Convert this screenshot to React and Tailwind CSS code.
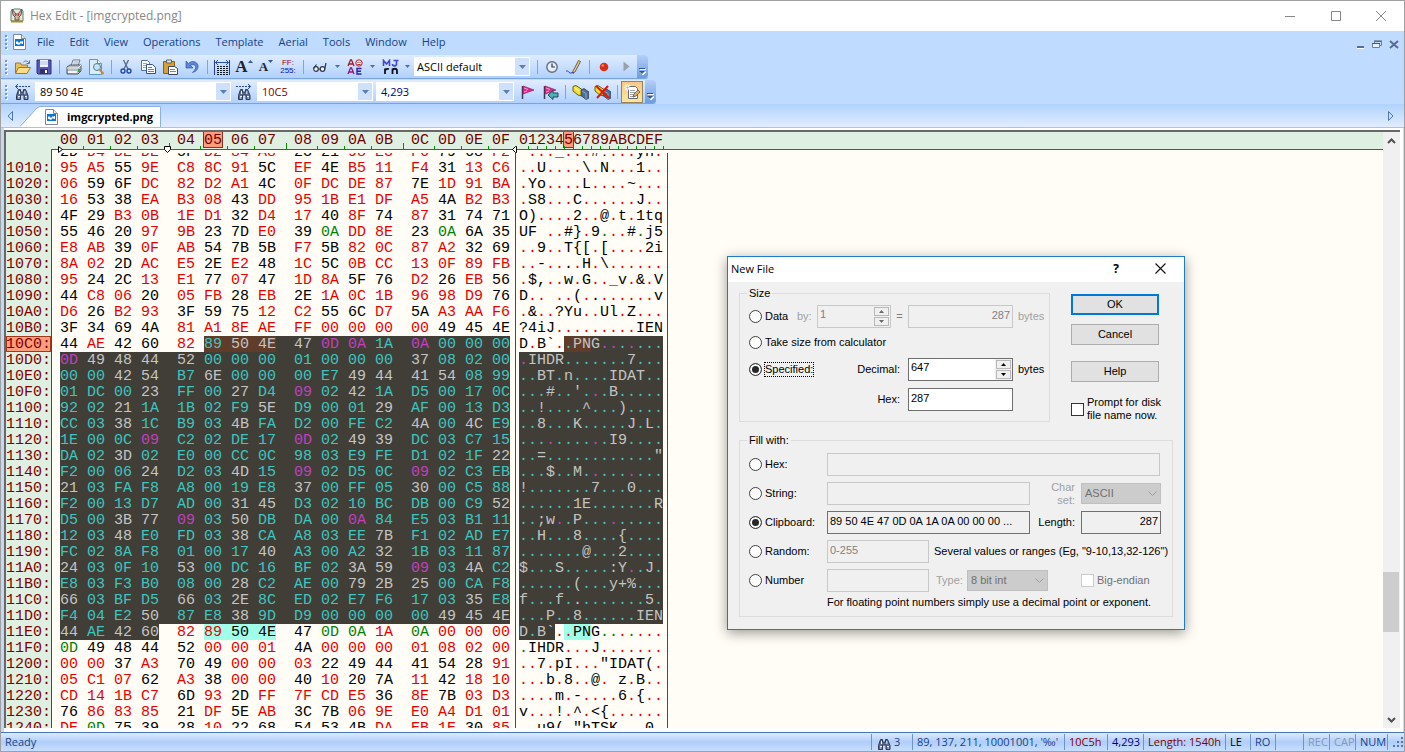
import React from 'react';

const MEMORY = `
1000 2D D4 DE DE 5F D2 84 A8 23 21 98 E3 F6 79 68 F2
1010 95 A5 55 9E C8 8C 91 5C EF 4E B5 11 F4 31 13 C6
1020 06 59 6F DC 82 D2 A1 4C 0F DC DE 87 7E 1D 91 BA
1030 16 53 38 EA B3 08 43 DD 95 1B E1 DF A5 4A B2 B3
1040 4F 29 B3 0B 1E D1 32 D4 17 40 8F 74 87 31 74 71
1050 55 46 20 97 9B 23 7D E0 39 0A DD 8E 23 0A 6A 35
1060 E8 AB 39 0F AB 54 7B 5B F7 5B 82 0C 87 A2 32 69
1070 8A 02 2D AC E5 2E E2 48 1C 5C 0B CC 13 0F 89 FB
1080 95 24 2C 13 E1 77 07 47 1D 8A 5F 76 D2 26 EB 56
1090 44 C8 06 20 05 FB 28 EB 2E 1A 0C 1B 96 98 D9 76
10A0 D6 26 B2 93 3F 59 75 12 C2 55 6C D7 5A A3 AA F6
10B0 3F 34 69 4A 81 A1 8E AE FF 00 00 00 00 49 45 4E
10C0 44 AE 42 60 82 89 50 4E 47 0D 0A 1A 0A 00 00 00
10D0 0D 49 48 44 52 00 00 00 01 00 00 00 37 08 02 00
10E0 00 00 42 54 B7 6E 00 00 00 E7 49 44 41 54 08 99
10F0 01 DC 00 23 FF 00 27 D4 09 02 42 1A D5 00 17 0C
1100 92 02 21 1A 1B 02 F9 5E D9 00 01 29 AF 00 13 D3
1110 CC 03 38 1C B9 03 4B FA D2 00 FE C2 4A 00 4C E9
1120 1E 00 0C 09 C2 02 DE 17 0D 02 49 39 DC 03 C7 15
1130 DA 02 3D 02 E0 00 CC 0C 98 03 E9 FE D1 02 1F 22
1140 F2 00 06 24 D2 03 4D 15 09 02 D5 0C 09 02 C3 EB
1150 21 03 FA F8 A8 00 19 E8 37 00 FF 05 30 00 C5 88
1160 F2 00 13 D7 AD 00 31 45 D3 02 10 BC DB 00 C9 52
1170 D5 00 3B 77 09 03 50 DB DA 00 0A 84 E5 03 B1 11
1180 12 03 48 E0 FD 03 38 CA A8 03 EE 7B F1 02 AD E7
1190 FC 02 8A F8 01 00 17 40 A3 00 A2 32 1B 03 11 87
11A0 24 03 0F 10 53 00 DC 16 BF 02 3A 59 09 03 4A C2
11B0 E8 03 F3 B0 08 00 28 C2 AE 00 79 2B 25 00 CA F8
11C0 66 03 BF D5 66 03 2E 8C ED 02 E7 F6 17 03 35 E8
11D0 F4 04 E2 50 87 E8 38 9D D9 00 00 00 00 49 45 4E
11E0 44 AE 42 60 82 89 50 4E 47 0D 0A 1A 0A 00 00 00
11F0 0D 49 48 44 52 00 00 01 4A 00 00 00 01 08 02 00
1200 00 00 37 A3 70 49 00 00 03 22 49 44 41 54 28 91
1210 05 C1 07 62 A3 38 00 00 40 10 20 7A 11 42 18 10
1220 CD 14 1B C7 6D 93 2D FF 7F CD E5 36 8E 7B 03 D3
1230 76 86 83 85 21 DF 5E AB 3C 7B 06 9E E0 A4 D1 01
1240 DE 0D 75 39 28 10 22 68 54 53 4B DA EB 1E 30 85
`.trim().split('\n').map((line) => line.split(' '));

const SELECTION = [0x10c5, 0x11e3];
const MATCHES = [[0x10c5, 0x10c7], [0x11e5, 0x11e7]];
const CURSOR_COLUMN = 5;
const DIGITS = '0123456789ABCDEF'.split('');

const isSelected = (a) => a >= SELECTION[0] && a <= SELECTION[1];
const matchOf = (a) => MATCHES.findIndex(([s, e]) => a >= s && a <= e);

function fill(a) {
  if (matchOf(a) >= 0) return isSelected(a) ? 'bg-[#603c2a]' : 'bg-[#a0ffe8]';
  return isSelected(a) ? 'bg-[#403e36]' : '';
}

function gapFill(a) {
  if (matchOf(a) >= 0 && matchOf(a) === matchOf(a + 1)) return fill(a);
  return isSelected(a) && isSelected(a + 1) ? 'bg-[#403e36]' : '';
}

function ink(hex, a) {
  const code = parseInt(hex, 16);
  const sel = isSelected(a);
  if (code === 9 || code === 10 || code === 13) return sel ? 'text-[#c040c0]' : 'text-[#008000]';
  if (code >= 32 && code < 127) return sel ? 'text-[#c4c4c4]' : 'text-black';
  return sel ? 'text-[#3fc4c0]' : 'text-[#e80000]';
}

function glyph(hex) {
  const code = parseInt(hex, 16);
  return code >= 32 && code < 127 ? String.fromCharCode(code) : '.';
}

const cellWidth = (i) => (i === 15 ? 'w-[18px]' : i % 4 === 3 ? 'w-[36px]' : 'w-[27px]');

/* ---------- icons ---------- */

const Svg = ({ w = 16, h = 16, children, className = '' }) => (
  <svg width={w} height={h} viewBox={`0 0 ${w} ${h}`} className={`shrink-0 ${className}`} aria-hidden="true">{children}</svg>
);

const LogoIcon = () => (
  <Svg w={14} h={16}>
    <path d="M1 3l3-2h6l3 2v10H1z" fill="#e4ecd4" stroke="#5b7b6e" />
    <path d="M1 13.500h12" stroke="#b08a28" strokeWidth="2" />
    <path d="M2 1l4 5h2l4-5-1 6-2 2v3H5V9L3 7z" fill="#dcae9c" stroke="#4c4c5c" strokeWidth=".9" />
    <path d="M5 6l1 2M9 6L8 8" stroke="#b02020" />
  </Svg>
);

const DocIcon = () => (
  <Svg w={13} h={16}>
    <path d="M.5 .5h8l4 4v11H.5z" fill="#fff" stroke="#808890" />
    <path d="M8.500.5v4h4" fill="#e4e8ec" stroke="#808890" />
    <path d="M2 5h9v7H2z" fill="#0a78d0" />
    <path d="M3 8l1-1 2 2 2-2 1 1v-1h1v3H9L8 9l-2 2-2-1H3z" fill="#fff" />
  </Svg>
);

const OpenIcon = () => (
  <Svg w={17}>
    <path d="M1.500 14V4h5l1 2h6v3" fill="#e8c060" stroke="#a07820" />
    <path d="M1.500 14.500l3-6h12l-3.500 6z" fill="#fcdc84" stroke="#a07820" />
    <path d="M9 3.500c2-2.500 5-1.500 6 .5m.5-2.500v3h-3" fill="none" stroke="#6070a0" />
  </Svg>
);

const SaveIcon = () => (
  <Svg>
    <path d="M1 1h14v14H2l-1-1z" fill="#5458b8" stroke="#30306c" />
    <path d="M4 1h8v7H4z" fill="#eef2fc" />
    <path d="M4 3h8M4 5h8" stroke="#b4c0e0" />
    <path d="M4 10h8v5H4z" fill="#303468" />
    <path d="M9 11h2v3H9z" fill="#fff" />
  </Svg>
);

const PrintIcon = () => (
  <Svg>
    <path d="M5 7l2-6h7l-2 6z" fill="#fff" stroke="#707888" />
    <path d="M7.500 3h5M7 5h5" stroke="#88a8d0" />
    <path d="M1 8l3-2h11v6l-3 3H1z" fill="#b8bcc4" stroke="#505860" />
    <path d="M1 9h11l3-3" fill="none" stroke="#eee" />
    <path d="M2 12h9v2H2z" fill="#f4f4f4" />
    <path d="M12 10h2v3h-2z" fill="#18b818" />
  </Svg>
);

const PreviewIcon = () => (
  <Svg>
    <path d="M1.500.5h8l4 4v11h-12z" fill="#d8ecfa" stroke="#5898c8" />
    <path d="M9.500.5v4h4" fill="#fff" stroke="#5898c8" />
    <circle cx="9" cy="8" r="3.500" fill="#c0e4f8" stroke="#607890" />
    <path d="M11.500 10.500l4 4.500" stroke="#c88838" strokeWidth="2" />
  </Svg>
);

const CutIcon = () => (
  <Svg>
    <path d="M5.500 1l4.500 9M10.500 1L6 10" stroke="#5c6c88" strokeWidth="1.400" />
    <circle cx="5" cy="12" r="2" fill="none" stroke="#2848a8" strokeWidth="1.400" />
    <circle cx="11" cy="12" r="2" fill="none" stroke="#2848a8" strokeWidth="1.400" />
  </Svg>
);

const CopyIcon = () => (
  <Svg>
    <path d="M1.500 1.500h6l2 2v8h-8z" fill="#fff" stroke="#5070b8" />
    <path d="M3 4.500h4M3 6.500h4M3 8.500h4" stroke="#88a4e0" />
    <path d="M6.500 5.500h6l3 3v6h-9z" fill="#fff" stroke="#3050a0" />
    <path d="M8 8.500h4M8 10.500h6M8 12.500h6" stroke="#5880d8" />
  </Svg>
);

const PasteIcon = () => (
  <Svg>
    <path d="M1.500 2.500h11v12h-11z" fill="#d8a030" stroke="#906010" />
    <path d="M4.500 1h5v3h-5z" fill="#e4e4e4" stroke="#606060" />
    <path d="M6.500 7.500h6l3 2v6h-9z" fill="#fff" stroke="#404860" />
    <path d="M8 10.500h5M8 12.500h6" stroke="#7088b8" />
  </Svg>
);

const UndoIcon = () => (
  <Svg>
    <path d="M2 2v7h7L6.500 6.500c3-2 6 0 5 3-.5 1.500-2 3-3 4 4-1 6-4 5.500-7C13 2.500 8 1 4.500 4.500z" fill="#5c84d8" stroke="#3458a8" strokeWidth=".7" />
  </Svg>
);

const GridIcon = () => (
  <Svg>
    <path d="M.5 1v15M15.500 1v15" stroke="#283c90" />
    <path d="M1 3.500h14M4 1L1.500 3.500 4 6M12 1l2.500 2.500L12 6" fill="none" stroke="#2850b8" />
    <path d="M3 7.500h11M3 9.500h11M3 11.500h11M3 13.500h11M3 15.500h11" stroke="#101820" strokeDasharray="2 1" />
  </Svg>
);

const FontIcon = ({ up }) => (
  <span className="flex items-center font-['Liberation_Serif',serif] font-bold leading-none text-[#202428]">
    <span className={up ? 'text-[17px]' : 'text-[13px]'}>A</span>
    <Svg w={5} h={14}><path d={up ? 'M0 3l2.500-3L5 3z' : 'M0 0l2.500 3L5 0z'} fill="#3858a8" /></Svg>
  </span>
);

const RadixIcon = () => (
  <span className="flex flex-col items-center font-['Liberation_Sans',sans-serif] text-[8px] leading-[8px]">
    <span className="text-[#a00010]">FF:</span>
    <span className="text-[#1010b0]">255:</span>
  </span>
);

const GlassesIcon = () => (
  <Svg>
    <circle cx="4" cy="10" r="2.300" fill="#eef4fc" stroke="#303848" strokeWidth="1.200" />
    <circle cx="10.500" cy="10" r="2.300" fill="#eef4fc" stroke="#303848" strokeWidth="1.200" />
    <path d="M1.500 9.500L4.500 5.500M12.700 10l1.300-6M6.500 10h1.500" fill="none" stroke="#303848" strokeWidth="1.200" />
  </Svg>
);

const CharsetIcon = () => (
  <Svg>
    <path d="M1 7l2.500-6h1L7 7M2 5h4" fill="none" stroke="#a02028" strokeWidth="1.300" />
    <circle cx="12" cy="4" r="3.200" fill="#fce8e8" stroke="#b02030" />
    <path d="M10.500 3.500h1M12.500 3.500h1M10.500 5.500h3" stroke="#b02030" />
    <path d="M1 15l2.500-6h1L7 15M2 13h4" fill="none" stroke="#8c1878" strokeWidth="1.300" />
    <path d="M14.500 9.500H10v5.500h4.500M10 12.300h4" fill="none" stroke="#3020a0" strokeWidth="1.400" />
  </Svg>
);

const FontsIcon = () => (
  <Svg w={17}>
    <path d="M1.500 7V1.500L4.500 5l3-3.500V7M14.500 1v4c0 2.500-4 2.500-4 0M11.500 1.500h5" fill="none" stroke="#4448c8" strokeWidth="1.600" />
    <path d="M3 15V9.500M3 12c0-2 2-2.500 4-2M10.500 15V9.500M10.500 12c0-3 4.500-3 4.500 0v3" fill="none" stroke="#101018" strokeWidth="1.800" />
  </Svg>
);

const ClockIcon = () => (
  <Svg w={14} h={14}>
    <circle cx="7" cy="7" r="5.200" fill="#e4eefc" stroke="#686c78" strokeWidth="1.400" />
    <path d="M7 3.500V7h3" fill="none" stroke="#303840" strokeWidth="1.200" />
  </Svg>
);

const PencilIcon = () => (
  <Svg>
    <path d="M7 12L12.500 1.500l2 1L9 13l-2.500 1z" fill="#f0c880" stroke="#605440" strokeWidth=".9" />
    <path d="M0 12.500c2-2 3 2 5 1.500s1-1 3 .5" fill="none" stroke="#3030c0" />
  </Svg>
);

const RecordIcon = () => (
  <Svg w={10} h={10}><circle cx="5" cy="5" r="4.300" fill="#d83010" /><circle cx="3.800" cy="3.500" r="1.300" fill="#f08860" /></Svg>
);

const PlayIcon = () => <Svg w={7} h={11}><path d="M.5.5v10l6-5z" fill="#98a0ac" /></Svg>;

const Binoculars = ({ dir }) => (
  <Svg w={16} h={16}>
    {dir === 'left' && <path d="M2 2.500h2m1 0h2m1 0h2m1 0h2m1 0h2M4 0L1.500 2.500 4 5" fill="none" stroke="#2c4ea0" />}
    {dir === 'right' && <path d="M0 2.500h2m1 0h2m1 0h2m1 0h2m1 0h3M12 0l2.500 2.500L12 5" fill="none" stroke="#2c4ea0" />}
    <path d="M4.500 5.500h2V8h3V5.500h2L14 11.500v4h-4V11H6.500v4.500h-4v-4z" fill="#5c6c90" stroke="#2c3858" />
    <path d="M4 12.500h2M11 12.500h2M5.500 7v3M10.800 7v3M4 14h1.500M11.500 14h1.500" stroke="#e8f0fc" />
  </Svg>
);

const FlagIcon = ({ arrow }) => (
  <Svg w={17}>
    <path d="M2.500 2v13" stroke="#403850" strokeWidth="1.500" />
    <path d="M3 2l11 4-11 4z" fill="#e02890" stroke="#901858" strokeWidth=".7" />
    <path d="M4 4l4 1.500M4 8l3-1" stroke="#f8a0c8" />
    {arrow && <path d="M6 11l5-4.500V9h5v4h-5v2.500z" fill="#50b0b8" stroke="#204858" />}
  </Svg>
);

const HighlighterIcon = ({ crossed }) => (
  <Svg w={17}>
    <path d="M1 2.500l3-1 6 4v6.500L6 11 1 7z" fill="#f8e028" stroke="#505018" strokeWidth=".9" />
    <path d="M9 6l3-1.500L17 8v6l-3 1.500-5-4z" fill="#506c98" stroke="#283448" strokeWidth=".7" />
    <path d="M10 7l4 2.500V15" fill="none" stroke="#a0b4d0" strokeWidth=".8" />
    <path d="M2.500 3.500l5 3.500" stroke="#fff8a8" />
    {crossed && <path d="M2 2l13 12M14 2L3 14" stroke="#e01808" strokeWidth="2" />}
  </Svg>
);

const PropsIcon = () => (
  <Svg>
    <path d="M4.500 2.500h7l2 2v10h-9z" fill="#fff" stroke="#686c78" />
    <path d="M6 6.500h5M6 8.500h5M6 10.500h4M6 12.500h3" stroke="#a0a8b0" />
    <path d="M3.500 0v7M0 3.500h7M1 1l5 5M6 1L1 6" stroke="#fff" strokeWidth="1.200" />
    <path d="M3.500 1.500v4M1.500 3.500h4" stroke="#f8c830" />
    <path d="M9 13l1-3 4-4 2 2-4 4z" fill="#d8b078" stroke="#605040" strokeWidth=".8" />
  </Svg>
);

const Caret = () => (
  <Svg w={7} h={4}><path d="M0 0l3.500 4L7 0z" fill="#5580b8" /></Svg>
);

const SpinCaret = ({ up, dim }) => (
  <Svg w={5} h={3}><path d={up ? 'M0 3l2.500-3L5 3z' : 'M0 0l2.500 3L5 0z'} fill={dim ? '#686868' : '#000'} /></Svg>
);

/* ---------- window chrome ---------- */

const Grip = () => (
  <Svg w={10} h={16}>
    {[1, 5, 9, 13].map((y) => (
      <g key={y}><path d={`M5 ${y + 1}h2v2H5z`} fill="#fff" /><path d={`M4 ${y}h2v2H4z`} fill="#6c96d4" /></g>
    ))}
  </Svg>
);

const Separator = () => <div className="flex w-2 shrink-0 justify-center"><div className="h-[14px] w-px bg-[#7ea6dc]" /></div>;

const Tool = ({ label, active, children }) => (
  <button
    type="button"
    aria-label={label}
    className={`flex h-[22px] w-[22px] shrink-0 items-center justify-center ${active ? 'border border-[#98845c] bg-linear-to-b from-[#f8c888] to-[#ffe4a0]' : ''}`}
  >
    {children}
  </button>
);

const SplitTool = ({ label, children }) => (
  <div className="flex w-[35px] shrink-0 items-center">
    <Tool label={label}>{children}</Tool>
    <button type="button" aria-label={`${label} options`} className="flex h-[22px] w-[13px] items-center justify-center">
      <Svg w={5} h={3}><path d="M0 0l2.500 3L5 0z" fill="#4870b0" /></Svg>
    </button>
  </div>
);

const BarEnd = () => (
  <button type="button" aria-label="Toolbar options" className="flex h-full w-[11px] shrink-0 items-end justify-center rounded-r-[3px] bg-linear-to-b from-[#b4d0f8] to-[#6c9ce0] pb-[3px]">
    <Svg w={7} h={7}><path d="M1 1.500h6M1 4l3 3 3-3z" stroke="#fff" fill="#fff" /><path d="M0 .5h6" stroke="#305898" /><path d="M0 3l3 3 3-3z" fill="#305898" /></Svg>
  </button>
);

const Combo = ({ label, value, className, color }) => (
  <div className={`flex h-[19px] shrink-0 items-center bg-white ${className}`}>
    <input aria-label={label} defaultValue={value} className={`h-full min-w-0 flex-1 pl-[5px] text-[11px] outline-none ${color}`} />
    <button type="button" aria-label={`${label} history`} className="mr-px flex h-[17px] w-[14px] items-center justify-center bg-[#cfe0fa]"><Caret /></button>
  </div>
);

const MENUS = ['File', 'Edit', 'View', 'Operations', 'Template', 'Aerial', 'Tools', 'Window', 'Help'];

function TitleBar() {
  return (
    <header className="flex h-[30px] shrink-0 items-center bg-white pl-[9px]">
      <LogoIcon />
      <h1 className="ml-[6px] text-[12px] text-[#888]">Hex Edit - [imgcrypted.png]</h1>
      <div className="ml-auto flex">
        <button type="button" aria-label="Minimize" className="flex h-[30px] w-[46px] items-center justify-center"><Svg w={10} h={10}><path d="M0 5.500h10" stroke="#888" /></Svg></button>
        <button type="button" aria-label="Maximize" className="flex h-[30px] w-[45px] items-center justify-center"><Svg w={10} h={10}><path d="M.5.5h9v9h-9z" fill="none" stroke="#888" /></Svg></button>
        <button type="button" aria-label="Close" className="flex h-[30px] w-[46px] items-center justify-center"><Svg w={10} h={10}><path d="M0 0l10 10M10 0L0 10" stroke="#888" /></Svg></button>
      </div>
    </header>
  );
}

function MenuBar() {
  return (
    <nav className="flex h-[24px] shrink-0 items-center bg-[#bfdbff] pb-[2px] pr-[5px]">
      <Grip />
      <span className="ml-[2px]"><DocIcon /></span>
      <div className="ml-[4px] flex gap-px">
        {MENUS.map((m) => <button key={m} type="button" className="px-[7px] text-[11px] text-[#15428b]">{m}</button>)}
      </div>
      <div className="ml-auto flex items-center gap-[7px] pt-[4px]">
        <button type="button" aria-label="Minimize document"><Svg w={9} h={9}><path d="M1 8.500h7" stroke="#fff" /><path d="M1 7h7" stroke="#5c6c90" strokeWidth="2" /></Svg></button>
        <button type="button" aria-label="Restore document"><Svg w={10} h={9}><path d="M2.500 1.500h7v4h-7z" fill="none" stroke="#6880a8" /><path d="M.5 3.500h7v4h-7z" fill="#e8f0fc" stroke="#6880a8" /><path d="M0 3.500h8M2 1h8" stroke="#505868" /></Svg></button>
        <button type="button" aria-label="Close document"><Svg w={10} h={9}><path d="M1 1l8 7M9 1L1 8" stroke="#566c94" strokeWidth="2" /></Svg></button>
      </div>
    </nav>
  );
}

const BAR = 'flex h-[24px] w-max items-center rounded-r-[3px] border-b border-[#78a4e0] bg-linear-to-b from-[#e0ecff] via-[#c8dfff] to-[#b0d0fc]';

function ToolBars() {
  return (
    <div className="shrink-0 bg-[#bfdbff]">
      <div className={BAR}>
        <Grip />
        <Tool label="Open"><OpenIcon /></Tool>
        <Tool label="Save"><SaveIcon /></Tool>
        <Separator />
        <Tool label="Print"><PrintIcon /></Tool>
        <Tool label="Print preview"><PreviewIcon /></Tool>
        <Separator />
        <Tool label="Cut"><CutIcon /></Tool>
        <Tool label="Copy"><CopyIcon /></Tool>
        <Tool label="Paste"><PasteIcon /></Tool>
        <Tool label="Undo"><UndoIcon /></Tool>
        <Separator />
        <Tool label="Fit columns"><GridIcon /></Tool>
        <Tool label="Increase font"><FontIcon up /></Tool>
        <Tool label="Decrease font"><FontIcon /></Tool>
        <Tool label="Hex or decimal addresses"><RadixIcon /></Tool>
        <Separator />
        <div className="ml-[2px] flex">
          <SplitTool label="Display"><GlassesIcon /></SplitTool>
          <SplitTool label="Character set"><CharsetIcon /></SplitTool>
          <SplitTool label="Fonts"><FontsIcon /></SplitTool>
        </div>
        <div className="relative mr-[3px] w-[116px]">
          <select aria-label="Scheme" className="block h-[19px] w-full appearance-none bg-white pl-[3px] text-[11px] text-black">
            <option>ASCII default</option>
          </select>
          <span className="pointer-events-none absolute right-px top-px flex h-[17px] w-[14px] items-center justify-center bg-[#cfe0fa]"><Caret /></span>
        </div>
        <Separator />
        <Tool label="Time"><ClockIcon /></Tool>
        <Tool label="Edit scheme"><PencilIcon /></Tool>
        <Separator />
        <Tool label="Record"><RecordIcon /></Tool>
        <Tool label="Play"><PlayIcon /></Tool>
        <BarEnd />
      </div>
      <div className={`${BAR} mt-px`}>
        <Grip />
        <Tool label="Find previous"><Binoculars dir="left" /></Tool>
        <Combo label="Find" value="89 50 4E" className="ml-[2px] w-[196px]" color="text-black" />
        <div className="mx-[2px]"><Tool label="Find next"><Binoculars dir="right" /></Tool></div>
        <Combo label="Hex address" value="10C5" className="w-[116px]" color="text-[#800000]" />
        <Combo label="Decimal address" value="4,293" className="mx-[3px] w-[138px]" color="text-[#000080]" />
        <Tool label="Bookmark"><FlagIcon /></Tool>
        <Tool label="Next bookmark"><FlagIcon arrow /></Tool>
        <Separator />
        <Tool label="Highlight"><HighlighterIcon /></Tool>
        <Tool label="Clear highlight"><HighlighterIcon crossed /></Tool>
        <Separator />
        <Tool label="Properties" active><PropsIcon /></Tool>
        <div className="ml-[2px] h-full"><BarEnd /></div>
      </div>
    </div>
  );
}

function TabStrip() {
  return (
    <div className="flex h-[24px] shrink-0 items-end border-b border-[#a4c4ec] bg-linear-to-b from-[#b0d2fe] to-[#e2edff] px-[6px]">
      <button type="button" aria-label="Scroll tabs left" className="mb-[6px]"><Svg w={6} h={10}><path d="M5.500.5v9L1 5z" fill="none" stroke="#4878b8" /></Svg></button>
      <div className="ml-[7px] flex h-[21px] items-end">
        <Svg w={20} h={21}><path d="M0 21L17 2l3-1.500V21z" fill="#fff" /><path d="M0 20.500L17 2l3-1.500" fill="none" stroke="#8cb0e4" /></Svg>
        <button type="button" className="flex h-[21px] items-center rounded-tr-[2px] border-t border-r border-[#8cb0e4] bg-white pl-[5px] pr-[7px]">
          <DocIcon />
          <span className="ml-[9px] text-[11px] font-bold text-black">imgcrypted.png</span>
        </button>
      </div>
      <button type="button" aria-label="Scroll tabs right" className="mb-[6px] ml-auto mr-[4px]"><Svg w={6} h={10}><path d="M.5.5v9L5 5z" fill="none" stroke="#4878b8" /></Svg></button>
    </div>
  );
}

/* ---------- hex view ---------- */

const HEX_STARTS = DIGITS.map((_, i) => 54 + i * 27 + Math.floor(i / 4) * 9);

const MONO = "font-['Liberation_Mono',monospace] text-[15px]";

function Ruler() {
  return (
    <div className={`relative flex h-[18px] shrink-0 bg-[#dfefe1] pl-[54px] leading-[17px] text-[#700000] ${MONO}`}>
      {DIGITS.map((d, i) => (
        <div key={d} className={`shrink-0 ${cellWidth(i)}`}>
          <span className={`block h-[15px] w-[18px] ${i === CURSOR_COLUMN ? 'bg-[#ff9c7c] outline outline-[#903018]' : ''}`}>0{d}</span>
        </div>
      ))}
      <div className="ml-[9px] flex">
        {DIGITS.map((d, i) => (
          <span key={d} className={`h-[15px] w-[9px] ${i === CURSOR_COLUMN ? 'bg-[#ff9c7c] outline outline-[#903018]' : ''}`}>{d}</span>
        ))}
      </div>
      <div className="absolute bottom-0 left-[45px] right-0 h-px bg-[#009000]" />
      <svg className="absolute -bottom-[3px] left-0 z-10" width="664" height="10" aria-hidden="true">
        {HEX_STARTS.slice(1).map((x, k) => (
          <path key={x} d={k % 4 === 3 ? `M${x - 7.5} 0v7` : `M${x - 3.5} 3v4`} stroke="#009000" />
        ))}
        {DIGITS.map((d, i) => <path key={d} d={`M${522.5 + i * 9} 3v4`} stroke="#009000" />)}
        <path d="M52.500 3.500v6l4-3z" fill="#fff" stroke="#000" />
        <path d="M158.500 3.500h6v3l-3 3-3-3z" fill="#fff" stroke="#000" />
        <path d="M510.500 3.500v6h-1l-3-3 3-3z" fill="#fff" stroke="#000" />
      </svg>
    </div>
  );
}

function HexTable() {
  return (
    <table className={`-mt-[9px] border-separate border-spacing-0 leading-[18px] ${MONO}`}>
      <tbody>
        {MEMORY.map(([offset, ...bytes], row) => {
          const base = parseInt(offset, 16);
          return (
            <tr key={offset} className="h-4">
              <th scope="row" className="h-4 w-[46px] border-r border-[#008000] bg-[#dfefe1] p-0 text-left font-normal text-[#800000]">
                <span className={`block h-4 w-[45px] ${base === 0x10c0 ? 'bg-[#ff9c7c] outline -outline-offset-1 outline-[#a03818]' : ''}`}>{row > 0 ? `${offset}:` : ''}</span>
              </th>
              <td className="w-[8px] p-0" />
              {bytes.map((b, i) => (
                <td key={i} className={`h-4 p-0 ${cellWidth(i)} ${i < 15 ? gapFill(base + i) : ''}`}>
                  <span className={`block h-4 w-[18px] ${fill(base + i)} ${ink(b, base + i)}`}>{b}</span>
                </td>
              ))}
              <td className="w-[5px] p-0" />
              <td className="h-4 w-[153px] border-x border-[#008000] py-0 pl-[3px] pr-[4px]">
                <div className="flex h-4 w-[144px] whitespace-pre">
                  {bytes.map((b, i) => <span key={i} className={`h-4 w-[9px] ${fill(base + i)} ${ink(b, base + i)}`}>{glyph(b)}</span>)}
                </div>
              </td>
            </tr>
          );
        })}
      </tbody>
    </table>
  );
}

function ScrollBar() {
  return (
    <div className="flex w-[17px] shrink-0 flex-col items-center justify-between bg-[#f0f0f0]">
      <button type="button" aria-label="Scroll up" className="flex h-[17px] items-center"><Svg w={9} h={6}><path d="M1 5l3.500-3.500L8 5" fill="none" stroke="#505050" strokeWidth="2" /></Svg></button>
      <div className="flex w-full flex-1 flex-col">
        <div className="flex-[423]" />
        <div className="w-[16px] flex-[60] bg-[#cdcdcd]" />
        <div className="flex-[79]" />
      </div>
      <button type="button" aria-label="Scroll down" className="flex h-[17px] items-center"><Svg w={9} h={6}><path d="M1 1l3.500 3.500L8 1" fill="none" stroke="#505050" strokeWidth="2" /></Svg></button>
    </div>
  );
}

/* ---------- dialog ---------- */

const RADIO = 'm-0 h-[13px] w-[13px] shrink-0 appearance-none rounded-full border border-[#404040] bg-white checked:bg-[#282828] checked:shadow-[inset_0_0_0_2px_white]';

const Radio = ({ name, children, checked, focused, className = '' }) => (
  <label className={`flex shrink-0 items-center gap-[3px] ${className}`}>
    <input type="radio" name={name} defaultChecked={checked} className={RADIO} />
    <span className={focused ? 'outline-1 outline-dotted outline-black' : ''}>{children}</span>
  </label>
);

const Field = ({ label, className = '', disabled, value = '', readOnly, align = '' }) => (
  <input
    aria-label={label}
    defaultValue={value}
    disabled={disabled}
    readOnly={readOnly}
    className={`h-[23px] shrink-0 border px-[2px] pb-[3px] outline-none ${align} ${disabled ? 'border-[#c8c8c8] bg-[#f0f0f0] text-[#808080]' : readOnly ? 'border-[#707070] bg-[#f0f0f0]' : 'border-[#707070] bg-white'} ${className}`}
  />
);

const Spinner = ({ label, value, disabled, className }) => (
  <div className={`flex h-[23px] shrink-0 border ${disabled ? 'border-[#c8c8c8]' : 'border-[#707070] bg-white'} ${className}`}>
    <input aria-label={label} defaultValue={value} disabled={disabled} className={`min-w-0 flex-1 pb-[3px] pl-[2px] outline-none ${disabled ? 'text-[#808080]' : ''}`} />
    <div className="flex w-[17px] flex-col gap-px bg-[#f0f0f0] p-px">
      <button type="button" aria-label={`${label} up`} className="flex flex-1 items-center justify-center border border-[#b8b8b8]"><SpinCaret up dim={disabled} /></button>
      <button type="button" aria-label={`${label} down`} className="flex flex-1 items-center justify-center border border-[#b8b8b8]"><SpinCaret dim={disabled} /></button>
    </div>
  </div>
);

const Drop = ({ label, value, className }) => (
  <div className={`relative h-[21px] shrink-0 ${className}`}>
    <select aria-label={label} disabled className="h-full w-full appearance-none border border-[#bfbfbf] bg-[#cccccc] pl-[3px] text-[#707070]"><option>{value}</option></select>
    <Svg w={9} h={5} className="absolute right-[4px] top-[8px]"><path d="M.5.5l4 4 4-4" fill="none" stroke="#a0a0a0" /></Svg>
  </div>
);

const DIALOG_BUTTON = 'h-[21px] w-full bg-[#e1e1e1]';
const CHECK = 'm-0 h-[13px] w-[13px] shrink-0 appearance-none border bg-white';
const ROW = 'flex h-[29px] items-center';

function NewFileDialog() {
  return (
    <section
      role="dialog"
      aria-label="New File"
      className="absolute left-[726px] top-[255px] w-[458px] border border-[#1c7cc8] bg-[#f0f0f0] font-['Liberation_Sans',sans-serif] text-[11px] leading-[13px] text-black shadow-[0_3px_12px_rgba(0,0,0,0.4)]"
    >
      <div className="flex h-[25px] items-center bg-white pb-[2px] pl-[3px] pr-[18px] font-['Open_Sans',sans-serif]">
        <h2>New File</h2>
        <button type="button" aria-label="Context help" className="ml-auto text-[12px] font-bold">?</button>
        <button type="button" aria-label="Close dialog" className="ml-[36px]"><Svg w={11} h={11}><path d="M.5.5l10 10M10.500.5l-10 10" stroke="#101010" strokeWidth="1.100" /></Svg></button>
      </div>
      <form className="px-[11px] pb-[12px] pt-[4px]" onSubmit={(e) => e.preventDefault()}>
        <div className="flex items-start">
          <fieldset className="w-[311px] border border-[#dcdcdc] pb-[9px] pl-[9px]">
            <legend className="-ml-[2px] px-[2px] leading-[14px]">Size</legend>
            <div className="flex h-[28px] items-center pt-[4px]">
              <Radio name="size" className="w-[48px]">Data</Radio>
              <span className="w-[20px] text-[#a0a0a0]">by:</span>
              <Spinner label="Block count" value="1" disabled className="w-[74px]" />
              <span className="w-[17px] text-center text-[#808080]">=</span>
              <Field label="Data size" value="287" disabled align="text-right" className="w-[105px]" />
              <span className="ml-[5px] text-[#a0a0a0]">bytes</span>
            </div>
            <div className="flex h-[28px] items-center"><Radio name="size">Take size from calculator</Radio></div>
            <div className="flex h-[26px] items-center">
              <div className="flex w-[159px] items-center justify-between pr-2">
                <Radio name="size" checked focused>Specified:</Radio>
                <span>Decimal:</span>
              </div>
              <Spinner label="Decimal" value="647" className="w-[105px]" />
              <span className="ml-[5px]">bytes</span>
            </div>
            <label className="mt-1 flex h-[26px] items-center">
              <span className="w-[159px] pr-2 text-right">Hex:</span>
              <Field label="Hex size" value="287" className="w-[105px]" />
            </label>
          </fieldset>
          <div className="ml-[21px] mt-[8px] flex w-[88px] flex-col">
            <button type="submit" className={`${DIALOG_BUTTON} border-2 border-[#0078d7]`}>OK</button>
            <button type="button" className={`${DIALOG_BUTTON} mt-[9px] border border-[#adadad]`}>Cancel</button>
            <button type="button" className={`${DIALOG_BUTTON} mt-[16px] border border-[#adadad]`}>Help</button>
            <label className="mt-[14px] flex items-center gap-[3px] whitespace-nowrap">
              <input type="checkbox" className={`${CHECK} border-[#333]`} />
              <span>Prompt for disk<br />file name now.</span>
            </label>
          </div>
        </div>
        <fieldset className="mt-[11px] w-full border border-[#dcdcdc] pb-[7px] pl-[9px]">
          <legend className="-ml-[2px] px-[2px] leading-[14px]">Fill with:</legend>
          <div className="pt-[3px]">
            <div className={ROW}>
              <Radio name="fill" className="w-[78px]">Hex:</Radio>
              <Field label="Hex fill" disabled className="w-[333px]" />
            </div>
            <div className={ROW}>
              <Radio name="fill" className="w-[78px]">String:</Radio>
              <Field label="String fill" disabled className="w-[203px]" />
              <span className="w-[45px] text-right text-[#a0a0a0]">Char<br />set:</span>
              <Drop label="Char set" value="ASCII" className="ml-[6px] w-[80px]" />
            </div>
            <div className={ROW}>
              <Radio name="fill" checked className="w-[78px]">Clipboard:</Radio>
              <Field label="Clipboard contents" value="89 50 4E 47 0D 0A 1A 0A 00 00 00 ..." readOnly className="w-[203px]" />
              <span className="w-[45px] text-right">Length:</span>
              <Field label="Length" value="287" readOnly align="text-right" className="ml-[6px] w-[80px]" />
            </div>
            <div className={ROW}>
              <Radio name="fill" className="w-[78px]">Random:</Radio>
              <Field label="Random range" value="0-255" disabled className="w-[102px]" />
              <span className="ml-[5px] whitespace-nowrap">Several values or ranges (Eg, "9-10,13,32-126")</span>
            </div>
            <div className={ROW}>
              <Radio name="fill" className="w-[78px]">Number</Radio>
              <Field label="Number fill" disabled className="w-[102px]" />
              <span className="w-[38px] pl-[7px] text-[#a0a0a0]">Type:</span>
              <Drop label="Type" value="8 bit int" className="w-[81px]" />
              <label className="ml-[33px] flex items-center gap-[3px] text-[#707070]">
                <input type="checkbox" disabled className={`${CHECK} border-[#cccccc]`} />
                Big-endian
              </label>
            </div>
            <p className="pl-[78px] leading-[14px]">For floating point numbers simply use a decimal point or exponent.</p>
          </div>
        </fieldset>
      </form>
    </section>
  );
}

/* ---------- status bar ---------- */

const Pane = ({ className, children }) => (
  <div className={`flex h-[16px] shrink-0 items-center whitespace-nowrap border-l border-[#6c94c8] pl-[4px] ${className}`}>{children}</div>
);

function StatusBar() {
  return (
    <footer className="flex h-[19px] shrink-0 items-center border-t border-[#4878b8] bg-linear-to-b from-[#dceaff] via-[#b0cef8] to-[#c8deff] pl-[4px] text-[11px] text-[#15428b]">
      <span className="mr-auto">Ready</span>
      <Pane className="w-[41px]"><Binoculars /><span className="ml-[2px]">3</span></Pane>
      <Pane className="w-[152px]">89, 137, 211, 10001001, '‰'</Pane>
      <Pane className="w-[43px] text-[#800000]">10C5h</Pane>
      <Pane className="w-[36px] text-[#000080]">4,293</Pane>
      <Pane className="w-[82px] text-[#800000]">Length: 1540h</Pane>
      <Pane className="w-[25px] text-black">LE</Pane>
      <Pane className="w-[25px]">RO</Pane>
      <Pane className="w-[28px]" />
      <Pane className="w-[26px] text-[#8898b0]">REC</Pane>
      <Pane className="w-[26px] text-[#8898b0]">CAP</Pane>
      <Pane className="w-[32px]">NUM</Pane>
      <Pane className="w-[17px]"><Svg w={12} h={12}><path d="M9 1h2v2H9zM5 5h2v2H5zM9 5h2v2H9zM1 9h2v2H1zM5 9h2v2H5zM9 9h2v2H9z" fill="#5878a8" /></Svg></Pane>
    </footer>
  );
}

export default function App() {
  return (
    <div className="relative flex h-screen flex-col overflow-hidden border border-[#a0a0a0] bg-[#bfdbff] font-['Open_Sans','Noto_Sans',sans-serif] leading-[16px]">
      <TitleBar />
      <MenuBar />
      <ToolBars />
      <TabStrip />
      <main className="flex min-h-0 flex-1 flex-col border-l-[3px] border-r border-[#c4d8f4] bg-white pb-[4px] pr-[3px] pt-[2px]">
        <div className="flex min-h-0 flex-1 border-l-2 border-t-2 border-[#686868]">
          <div className="flex min-w-0 flex-1 flex-col overflow-hidden bg-[#fffdf5]">
            <Ruler />
            <div className="h-[3px] w-[46px] shrink-0 border-r border-[#008000] bg-[#dfefe1]" />
            <div className="min-h-0 flex-1 overflow-hidden"><HexTable /></div>
          </div>
          <ScrollBar />
        </div>
      </main>
      <StatusBar />
      <NewFileDialog />
    </div>
  );
}
